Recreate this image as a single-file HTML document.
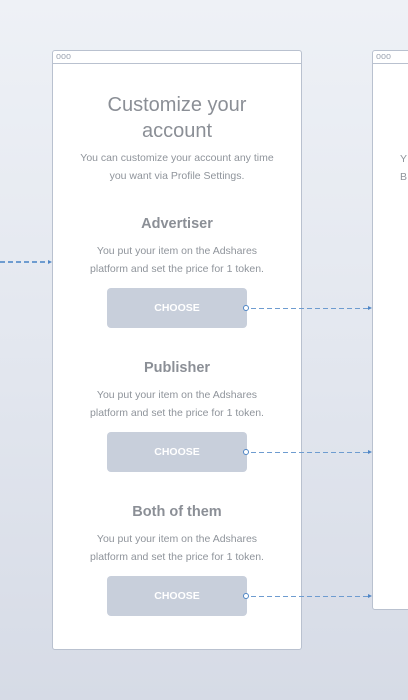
<!DOCTYPE html>
<html><head><meta charset="utf-8"><style>
*{margin:0;padding:0;box-sizing:border-box}
body{width:408px;height:700px;overflow:hidden;position:relative;font-family:"Liberation Sans",sans-serif;background:linear-gradient(180deg,#eef1f6 0%,#e3e7ef 50%,#d6dbe6 100%)}
.card{position:absolute;background:#fff;border:1px solid #b9c1cf;border-radius:3px}
.bar{height:13px;border-bottom:1px solid #b9c1cf;font-size:9px;color:#a0a8b5;padding-left:3px;line-height:11px}
.c{text-align:center;position:absolute;left:0;width:248px;color:#8b8f96}
h1{font-weight:normal;font-size:20px;line-height:26px;color:#8b8f96}
.sub{font-size:10.5px;line-height:18px;color:#8f949b}
h2{font-size:14.5px;font-weight:bold;color:#8b8f96}
.btn{position:absolute;left:54px;width:140px;height:40px;background:#c8cfdb;border-radius:4px;color:#fff;font-weight:bold;font-size:10.5px;text-align:center;line-height:40px}
.dash{position:absolute;height:1.5px;background:repeating-linear-gradient(90deg,#6e9cd0 0 5px,transparent 5px 8px)}
.dot{position:absolute;width:6px;height:6px;border:1px solid #4f86c6;border-radius:50%;background:#fff}
.arr{position:absolute;width:0;height:0;border-left:4px solid #4f86c6;border-top:2.5px solid transparent;border-bottom:2.5px solid transparent}
</style></head><body>
<div class="card" style="left:52px;top:50px;width:250px;height:600px">
<div class="bar">ooo</div>
<div class="c" style="top:41px"><h1>Customize your<br>account</h1></div>
<div class="c sub" style="top:98px">You can customize your account any time<br>you want via Profile Settings.</div>
<div class="c" style="top:165px"><h2>Advertiser</h2></div>
<div class="c sub" style="top:191px">You put your item on the Adshares<br>platform and set the price for 1 token.</div>
<div class="btn" style="top:237px">CHOOSE</div>
<div class="c" style="top:309px"><h2>Publisher</h2></div>
<div class="c sub" style="top:335px">You put your item on the Adshares<br>platform and set the price for 1 token.</div>
<div class="btn" style="top:381px">CHOOSE</div>
<div class="c" style="top:453px"><h2>Both of them</h2></div>
<div class="c sub" style="top:479px">You put your item on the Adshares<br>platform and set the price for 1 token.</div>
<div class="btn" style="top:525px">CHOOSE</div>
</div>
<div class="card" style="left:372px;top:50px;width:50px;height:560px">
<div class="bar">ooo</div>
<div class="sub" style="position:absolute;left:27px;top:99px;color:#8f949b">Y<br>B</div>
</div>
<div class="dash" style="left:0;top:261px;width:48px"></div><div class="arr" style="left:48px;top:259.5px"></div>
<div class="dot" style="left:243px;top:305px"></div><div class="dash" style="left:251px;top:307.5px;width:117px"></div><div class="arr" style="left:368px;top:305.5px"></div>
<div class="dot" style="left:243px;top:449px"></div><div class="dash" style="left:251px;top:451.5px;width:117px"></div><div class="arr" style="left:368px;top:449.5px"></div>
<div class="dot" style="left:243px;top:593px"></div><div class="dash" style="left:251px;top:595.5px;width:117px"></div><div class="arr" style="left:368px;top:593.5px"></div>
</body></html>
